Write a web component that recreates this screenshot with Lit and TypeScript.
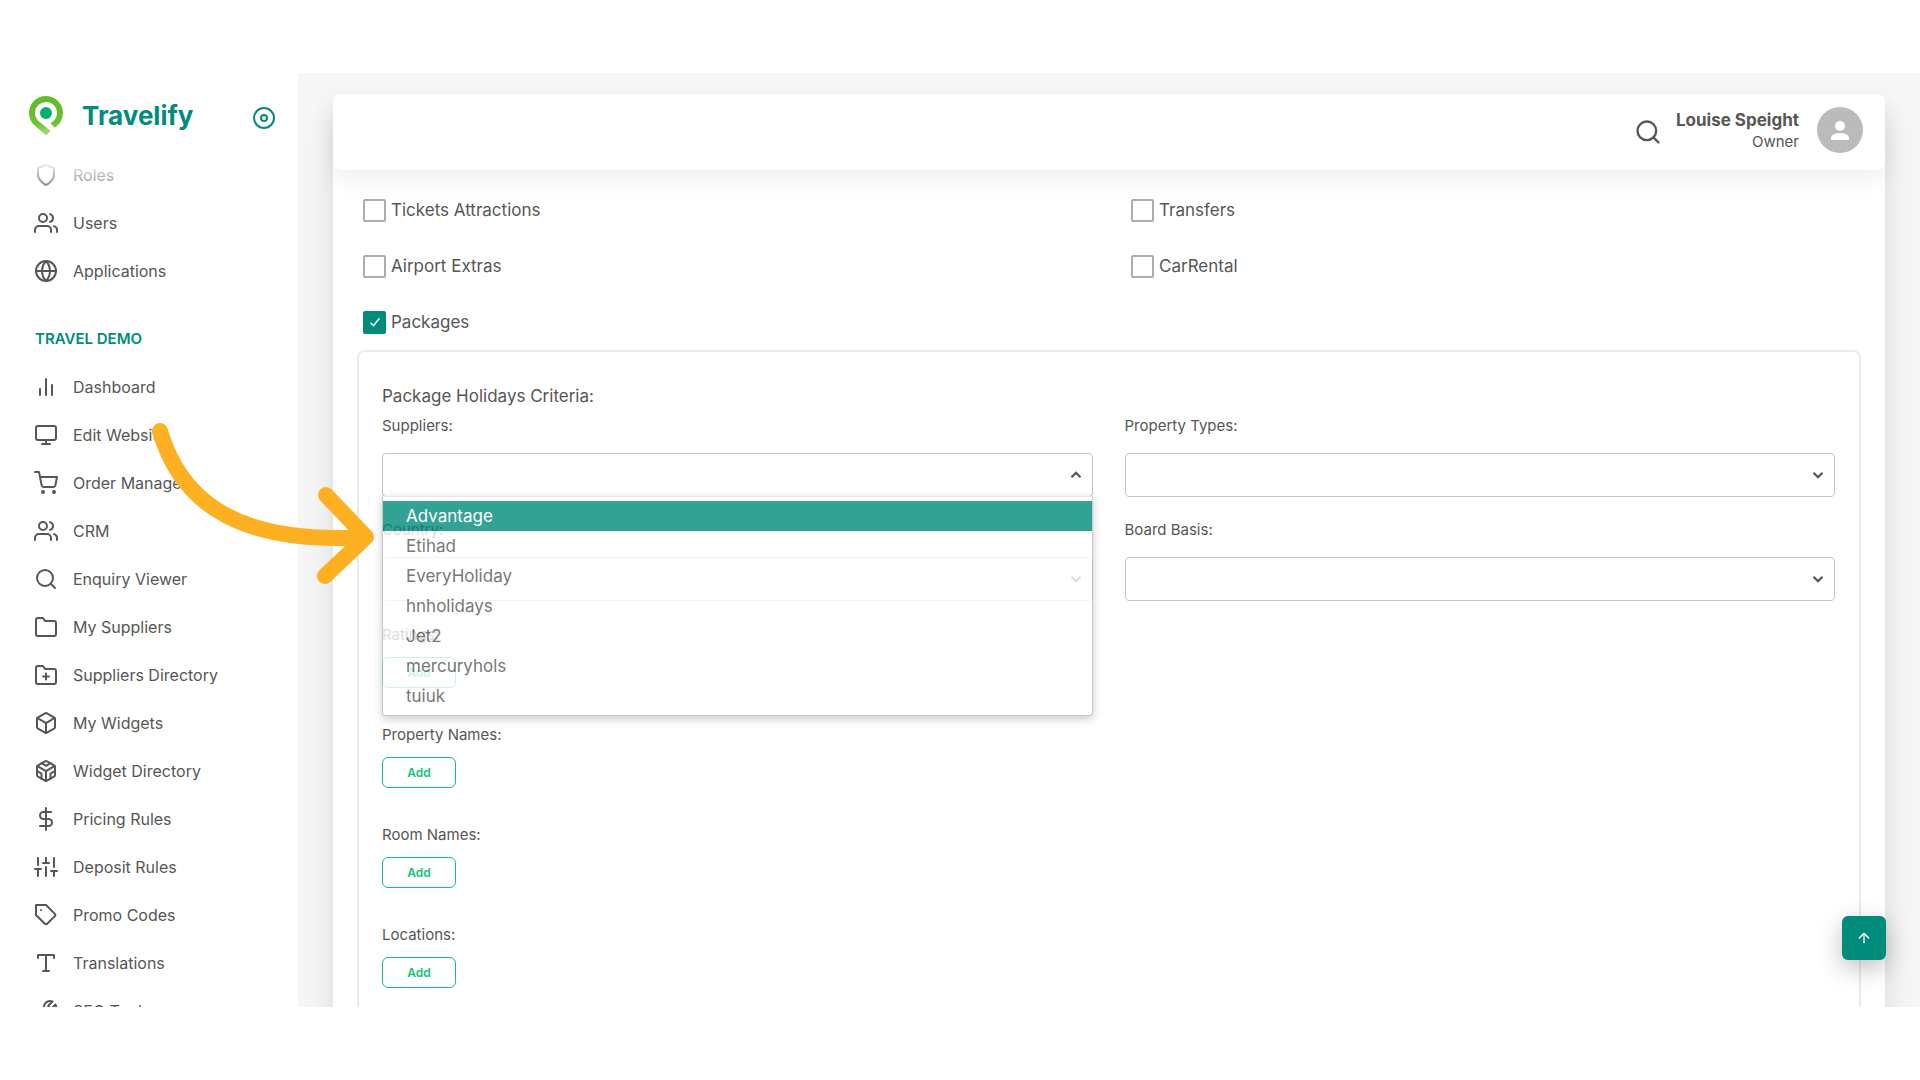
import { LitElement, html, css, svg } from "lit";
import { customElement, state } from "lit/decorators.js";
import { classMap } from "lit/directives/class-map.js";

const icons: Record<string, unknown> = {
  shield: svg`<path d="M12 22s8-4 8-10V5l-8-3-8 3v7c0 6 8 10 8 10z"/>`,
  users: svg`<path d="M17 21v-2a4 4 0 0 0-4-4H5a4 4 0 0 0-4 4v2"/><circle cx="9" cy="7" r="4"/><path d="M23 21v-2a4 4 0 0 0-3-3.87M16 3.13a4 4 0 0 1 0 7.75"/>`,
  globe: svg`<circle cx="12" cy="12" r="10"/><path d="M2 12h20M12 2a15.3 15.3 0 0 1 4 10 15.3 15.3 0 0 1-4 10 15.3 15.3 0 0 1-4-10 15.3 15.3 0 0 1 4-10z"/>`,
  bars: svg`<path d="M18 20V10M12 20V4M6 20v-6"/>`,
  monitor: svg`<rect x="2" y="3" width="20" height="14" rx="2"/><path d="M8 21h8M12 17v4"/>`,
  cart: svg`<circle cx="9" cy="21" r="1"/><circle cx="20" cy="21" r="1"/><path d="M1 1h4l2.68 13.39a2 2 0 0 0 2 1.61h9.72a2 2 0 0 0 2-1.61L23 6H6"/>`,
  search: svg`<circle cx="11" cy="11" r="8"/><path d="M21 21l-4.35-4.35"/>`,
  folder: svg`<path d="M22 19a2 2 0 0 1-2 2H4a2 2 0 0 1-2-2V5a2 2 0 0 1 2-2h5l2 3h9a2 2 0 0 1 2 2z"/>`,
  folderPlus: svg`<path d="M22 19a2 2 0 0 1-2 2H4a2 2 0 0 1-2-2V5a2 2 0 0 1 2-2h5l2 3h9a2 2 0 0 1 2 2zM12 10.5v6M9 13.5h6"/>`,
  box: svg`<path d="M21 16V8a2 2 0 0 0-1-1.73l-7-4a2 2 0 0 0-2 0l-7 4A2 2 0 0 0 3 8v8a2 2 0 0 0 1 1.73l7 4a2 2 0 0 0 2 0l7-4A2 2 0 0 0 21 16z"/><path d="M3.27 6.96L12 12.01l8.73-5.05M12 22.08V12"/>`,
  sandbox: svg`<path d="M21 16V8a2 2 0 0 0-1-1.73l-7-4a2 2 0 0 0-2 0l-7 4A2 2 0 0 0 3 8v8a2 2 0 0 0 1 1.73l7 4a2 2 0 0 0 2 0l7-4A2 2 0 0 0 21 16z"/><path d="M7.5 4.21l4.5 2.6 4.5-2.6M7.5 19.79V14.6L3 12M21 12l-4.5 2.6v5.19M3.27 6.96L12 12.01l8.73-5.05M12 22.08V12"/>`,
  dollar: svg`<path d="M12 1v22M17 5H9.5a3.5 3.5 0 0 0 0 7h5a3.5 3.5 0 0 1 0 7H6"/>`,
  sliders: svg`<path d="M4 21v-7M4 10V3M12 21v-9M12 8V3M20 21v-5M20 12V3M1 14h6M9 8h6M17 16h6"/>`,
  tag: svg`<path d="M20.59 13.41l-7.17 7.17a2 2 0 0 1-2.83 0L2 12V2h10l8.59 8.59a2 2 0 0 1 0 2.82zM7 7h.01"/>`,
  type: svg`<path d="M4 7V4h16v3M9 20h6M12 4v16"/>`,
  tool: svg`<path d="M14.7 6.3a1 1 0 0 0 0 1.4l1.6 1.6a1 1 0 0 0 1.4 0l3.77-3.77a6 6 0 0 1-7.94 7.94l-6.91 6.91a2.12 2.12 0 0 1-3-3l6.91-6.91a6 6 0 0 1 7.94-7.94l-3.76 3.76z"/>`,
  target: svg`<circle cx="12" cy="12" r="10"/><circle cx="12" cy="12" r="3"/>`,
  up: svg`<path d="M12 19V5M5 12l7-7 7 7"/>`,
  chevron: svg`<path d="M6 9l6 6 6-6"/>`,
};

const icon = (name: string) =>
  html`<svg class="icon" viewBox="0 0 24 24" aria-hidden="true">${icons[name]}</svg>`;

const general = [
  ["shield", "Roles"],
  ["users", "Users"],
  ["globe", "Applications"],
];

const demo = [
  ["bars", "Dashboard"],
  ["monitor", "Edit Website"],
  ["cart", "Order Manager"],
  ["users", "CRM"],
  ["search", "Enquiry Viewer"],
  ["folder", "My Suppliers"],
  ["folderPlus", "Suppliers Directory"],
  ["box", "My Widgets"],
  ["sandbox", "Widget Directory"],
  ["dollar", "Pricing Rules"],
  ["sliders", "Deposit Rules"],
  ["tag", "Promo Codes"],
  ["type", "Translations"],
  ["tool", "SEO Tools"],
];

const suppliers = ["Advantage", "Etihad", "EveryHoliday", "hnholidays", "Jet2", "mercuryhols", "tuiuk"];

@customElement("side-nav")
class SideNav extends LitElement {
  static styles = css`
    :host {
      display: flex;
      flex-direction: column;
      min-height: 0;
      overflow: hidden;
      background: #fff;
      color: #565656;
    }
    .brand {
      display: flex;
      align-items: center;
      flex: none;
      height: 78px;
      padding: 8px 22px 0 29px;
      box-sizing: border-box;
      color: #008b7b;
    }
    .logo {
      width: 34px;
      height: 40px;
    }
    .name {
      flex: 1;
      padding-left: 19px;
      font-size: 26px;
      font-weight: 700;
      line-height: 32px;
    }
    .pin {
      display: flex;
      padding: 4px 0 0;
      border: 0;
      background: none;
      color: inherit;
    }
    .icon {
      flex: none;
      width: 24px;
      height: 24px;
      fill: none;
      stroke: currentColor;
      stroke-width: 2;
      stroke-linecap: round;
      stroke-linejoin: round;
    }
    .scroll {
      position: relative;
      flex: 1;
      min-height: 0;
      overflow: hidden;
    }
    .scroll::before {
      content: "";
      position: absolute;
      inset: 0 0 auto;
      height: 48px;
      background: linear-gradient(#fff 20%, rgba(255, 255, 255, 0.6) 50%, rgba(255, 255, 255, 0));
    }
    ul {
      margin: 0;
      padding: 0;
      list-style: none;
    }
    a {
      display: flex;
      align-items: center;
      gap: 15px;
      height: 48px;
      padding-left: 34px;
      color: inherit;
      font-size: 16px;
      font-weight: 400;
      text-decoration: none;
    }
    h2 {
      margin: 0;
      padding: 32px 0 12px 35px;
      color: #008b7b;
      font-size: 15px;
      font-weight: 600;
      line-height: 24px;
    }
  `;

  private list(items: string[][]) {
    return html`<ul>
      ${items.map(([glyph, label]) => html`<li><a href="#">${icon(glyph)}<span>${label}</span></a></li>`)}
    </ul>`;
  }

  render() {
    return html`
      <div class="brand">
        <svg class="logo" viewBox="0 0 34 40" aria-hidden="true">
          <defs>
            <linearGradient id="leaf" x1="0" y1="0" x2="0" y2="1">
              <stop offset="0" stop-color="#62bb2c" />
              <stop offset="0.7" stop-color="#6cc22f" />
              <stop offset="1" stop-color="#b5e08c" />
            </linearGradient>
          </defs>
          <path
            fill="url(#leaf)"
            d="M17 0A17 17 0 0 0 0 17c0 5 2 9 5 12l12 10.500 4.500-4.500L9.500 25A11 11 0 1 1 21.500 27l4 4.700A17 17 0 0 0 17 0z"
          />
          <circle cx="17" cy="17" r="6" fill="#00b070" />
        </svg>
        <span class="name">Travelify</span>
        <button class="pin" aria-label="Pin menu">${icon("target")}</button>
      </div>
      <nav class="scroll">
        ${this.list(general)}
        <h2>TRAVEL DEMO</h2>
        ${this.list(demo)}
      </nav>
    `;
  }
}

@customElement("criteria-form")
class CriteriaForm extends LitElement {
  @state() private active = "Advantage";

  static styles = css`
    :host {
      display: block;
      padding: 12px 24px 0;
      color: #565656;
      font-size: 17px;
    }
    .checks {
      display: grid;
      grid-template-columns: 1fr 1fr;
      column-gap: 38px;
      padding-left: 6px;
    }
    .check {
      display: flex;
      align-items: center;
      gap: 5px;
      height: 56px;
    }
    .check input {
      appearance: none;
      width: 23px;
      height: 23px;
      margin: 0;
      border: 2px solid #adadad;
      border-radius: 2px;
      background: #fff;
    }
    .check input:checked {
      border-color: #008b7b;
      background: #008b7b;
    }
    .box {
      display: grid;
      place-items: center;
    }
    .box > * {
      grid-area: 1 / 1;
    }
    .tick {
      z-index: 1;
      width: 12px;
      height: 12px;
      fill: none;
      stroke: #fff;
      stroke-width: 2;
      pointer-events: none;
    }
    fieldset {
      min-width: 0;
      margin: 0;
      padding: 30px 24px 40px 23px;
      border: 2px solid #ebebeb;
      border-radius: 8px;
    }
    .title {
      margin: 0;
      line-height: 28px;
    }
    .grid {
      display: grid;
      grid-template-columns: 1fr 1fr;
      column-gap: 32px;
      padding-bottom: 1px;
    }
    .field {
      position: relative;
      height: 104px;
    }
    .label {
      display: block;
      font-size: 15px;
      line-height: 32px;
    }
    .select {
      position: relative;
      margin-top: 11px;
    }
    select {
      display: block;
      appearance: none;
      width: 100%;
      height: 44px;
      border: 1px solid #c4c4c4;
      border-radius: 4px;
      background: #fff;
    }
    .chevron {
      position: absolute;
      top: 13px;
      right: 8px;
      width: 18px;
      height: 18px;
    }
    .open .chevron {
      transform: rotate(180deg);
    }
    .icon {
      display: block;
      width: 100%;
      height: 100%;
      fill: none;
      stroke: currentColor;
      stroke-width: 3;
    }
    .menu {
      position: absolute;
      z-index: 2;
      top: 43px;
      left: 0;
      right: 0;
      margin: 0;
      padding: 4px 0;
      border: 1px solid #bbb;
      border-top-color: #f0f0f0;
      border-radius: 0 0 4px 4px;
      background: #fff;
      box-shadow: 0 3px 8px rgba(0, 0, 0, 0.25);
      list-style: none;
      opacity: 0.8;
    }
    .option {
      padding-left: 23px;
      line-height: 30px;
    }
    .option.active {
      background: #008b7b;
      color: #fff;
    }
    .group {
      display: flex;
      flex-direction: column;
      align-items: flex-start;
      gap: 6px;
      height: 100px;
    }
    .add {
      width: 74px;
      height: 31px;
      padding: 0;
      border: 1px solid #14c274;
      border-radius: 6px;
      background: #fff;
      color: #14c274;
      font: 600 12px "Inter", sans-serif;
    }
  `;

  private check(id: string, label: string, checked = false) {
    return html`<div class="check">
      <span class="box">
        <input type="checkbox" id=${id} .checked=${checked} />
        ${checked ? html`<svg class="tick" viewBox="0 0 16 16"><path d="M2 9l4 4 8-10" /></svg>` : ""}
      </span>
      <label for=${id}>${label}</label>
    </div>`;
  }

  private field(id: string, label: string, open = false) {
    return html`<div class="field">
      <label class="label" for=${id}>${label}</label>
      <div class=${classMap({ select: true, open })}>
        <select id=${id}></select>
        <span class="chevron">${icon("chevron")}</span>
        ${open
          ? html`<ul class="menu" role="listbox">
              ${suppliers.map(
                (name) => html`<li
                  class=${classMap({ option: true, active: name === this.active })}
                  role="option"
                  @mouseenter=${() => (this.active = name)}
                >
                  ${name}
                </li>`
              )}
            </ul>`
          : ""}
      </div>
    </div>`;
  }

  private group(label: string) {
    return html`<div class="group">
      <span class="label">${label}</span>
      <button class="add">Add</button>
    </div>`;
  }

  render() {
    return html`
      <div class="checks">
        ${this.check("tickets", "Tickets Attractions")} ${this.check("transfers", "Transfers")}
        ${this.check("airport", "Airport Extras")} ${this.check("car", "CarRental")}
        ${this.check("packages", "Packages", true)}
      </div>
      <fieldset>
        <p class="title">Package Holidays Criteria:</p>
        <div class="grid">
          ${this.field("suppliers", "Suppliers:", true)} ${this.field("types", "Property Types:")}
          ${this.field("country", "Country:")} ${this.field("board", "Board Basis:")}
        </div>
        ${["Ratings:", "Property Names:", "Room Names:", "Locations:"].map((label) => this.group(label))}
      </fieldset>
    `;
  }
}

@customElement("app-root")
class AppRoot extends LitElement {
  static styles = css`
    :host {
      display: block;
      position: relative;
      box-sizing: border-box;
      height: 100vh;
      padding: 73px 0;
      overflow: hidden;
      background: #fff;
      color: #565656;
      font-family: "Inter", sans-serif;
    }
    .frame {
      position: relative;
      display: grid;
      grid-template-columns: 298px minmax(0, 1fr);
      height: 100%;
      overflow: hidden;
    }
    main {
      padding: 21px 35px 0;
      overflow: hidden;
      background: #f6f6f6;
    }
    .panel {
      min-height: 100%;
      border-radius: 8px;
      background: #fff;
      box-shadow: 0 24px 30px rgba(0, 0, 0, 0.12);
    }
    header {
      display: flex;
      align-items: center;
      justify-content: flex-end;
      height: 76px;
      padding: 0 22px 5px;
      box-sizing: border-box;
      border-radius: 8px;
      background: #fff;
      box-shadow: 0 8px 24px rgba(0, 0, 0, 0.07);
    }
    .icon {
      display: block;
      width: 28px;
      height: 28px;
      fill: none;
      stroke: currentColor;
      stroke-width: 2;
      stroke-linecap: round;
      stroke-linejoin: round;
    }
    .search {
      padding: 4px 0 0;
      border: 0;
      background: none;
      color: inherit;
    }
    .user {
      padding: 0 18px 0 14px;
      text-align: right;
    }
    .person {
      font-size: 17px;
      font-weight: 700;
      line-height: 24px;
    }
    .role {
      font-size: 15px;
      line-height: 20px;
    }
    .avatar {
      width: 46px;
      height: 46px;
    }
    .top {
      position: absolute;
      right: 34px;
      bottom: 47px;
      display: grid;
      place-items: center;
      width: 44px;
      height: 44px;
      padding: 0;
      border: 0;
      border-radius: 6px;
      background: #008b7b;
      color: #fff;
      box-shadow: 0 8px 25px rgba(0, 0, 0, 0.25);
    }
    .top .icon {
      width: 16px;
      height: 16px;
    }
    .arrow {
      position: absolute;
      top: 410px;
      left: 140px;
      width: 250px;
      height: 190px;
      fill: none;
      stroke: #feb023;
      stroke-width: 16;
      stroke-linecap: round;
      stroke-linejoin: round;
      pointer-events: none;
    }
  `;

  render() {
    return html`
      <div class="frame">
        <side-nav></side-nav>
        <main>
          <div class="panel">
            <header>
              <button class="search" aria-label="Search">${icon("search")}</button>
              <div class="user">
                <div class="person">Louise Speight</div>
                <div class="role">Owner</div>
              </div>
              <svg class="avatar" viewBox="0 0 46 46" aria-hidden="true">
                <circle cx="23" cy="23" r="23" fill="#bbb" />
                <circle cx="23" cy="19" r="5" fill="#fff" />
                <path d="M14 33v-2c0-3.500 4.500-5 9-5s9 1.500 9 5v2z" fill="#fff" />
              </svg>
            </header>
            <criteria-form></criteria-form>
          </div>
        </main>
        <button class="top" aria-label="Back to top">${icon("up")}</button>
      </div>
      <svg class="arrow" viewBox="140 410 250 190" aria-hidden="true">
        <path d="M160 431C178 492 226 546 366 537M326 495l40 42-41 39" />
      </svg>
    `;
  }
}
